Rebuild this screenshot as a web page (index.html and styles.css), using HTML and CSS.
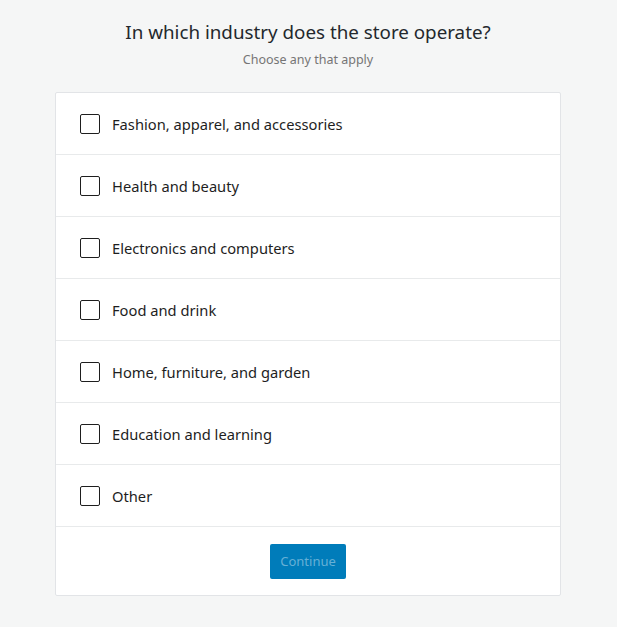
FILE: index.html
```html
<!DOCTYPE html>
<html lang="en">
<head>
<meta charset="utf-8">
<title>Industry</title>
<link rel="stylesheet" href="styles.css">
</head>
<body>
<main class="page">
  <header class="head">
    <h1 class="title">In which industry does the store operate?</h1>
    <p class="subtitle">Choose any that apply</p>
  </header>
  <section class="card">
    <label class="row"><span class="box"></span><span class="label">Fashion, apparel, and accessories</span></label>
    <label class="row"><span class="box"></span><span class="label">Health and beauty</span></label>
    <label class="row"><span class="box"></span><span class="label">Electronics and computers</span></label>
    <label class="row"><span class="box"></span><span class="label">Food and drink</span></label>
    <label class="row"><span class="box"></span><span class="label">Home, furniture, and garden</span></label>
    <label class="row"><span class="box"></span><span class="label">Education and learning</span></label>
    <label class="row"><span class="box"></span><span class="label">Other</span></label>
    <div class="footer"><button class="btn" type="button">Continue</button></div>
  </section>
</main>
</body>
</html>
```
FILE: styles.css
```css
html, body {
  margin: 0;
  padding: 0;
  background: #f5f6f6;
  font-family: "Noto Sans", "Open Sans", sans-serif;
  color: #1e1e1e;
}
body {
  padding-right: 1px;
}
.page {
  width: 506px;
  margin: 0 auto;
  padding-top: 18px;
}
.head {
  text-align: center;
  margin-bottom: 23px;
}
.title {
  margin: 0;
  font-size: 18.8px;
  font-weight: 400;
  line-height: 28px;
  color: #23282d;
}
.subtitle {
  margin: 5px 0 0;
  font-size: 12.5px;
  line-height: 18px;
  color: #757575;
}
.card {
  background: #fff;
  border: 1px solid #e2e4e7;
  border-radius: 2px;
}
.row {
  display: flex;
  align-items: center;
  height: 61px;
  padding-left: 24px;
  border-bottom: 1px solid #e8eaeb;
  cursor: pointer;
}
.box {
  width: 18px;
  height: 18px;
  border: 1px solid #1e1e1e;
  border-radius: 2px;
  flex: none;
  margin-right: 12px;
}
.label {
  font-size: 14.7px;
  color: #1e1e1e;
}
.footer {
  height: 68px;
  display: flex;
  justify-content: center;
  align-items: center;
}
.btn {
  width: 76px;
  height: 35px;
  border: none;
  border-radius: 2px;
  background: #007cba;
  color: #66b0d6;
  font-family: inherit;
  font-size: 13px;
  padding: 0;
}
```
